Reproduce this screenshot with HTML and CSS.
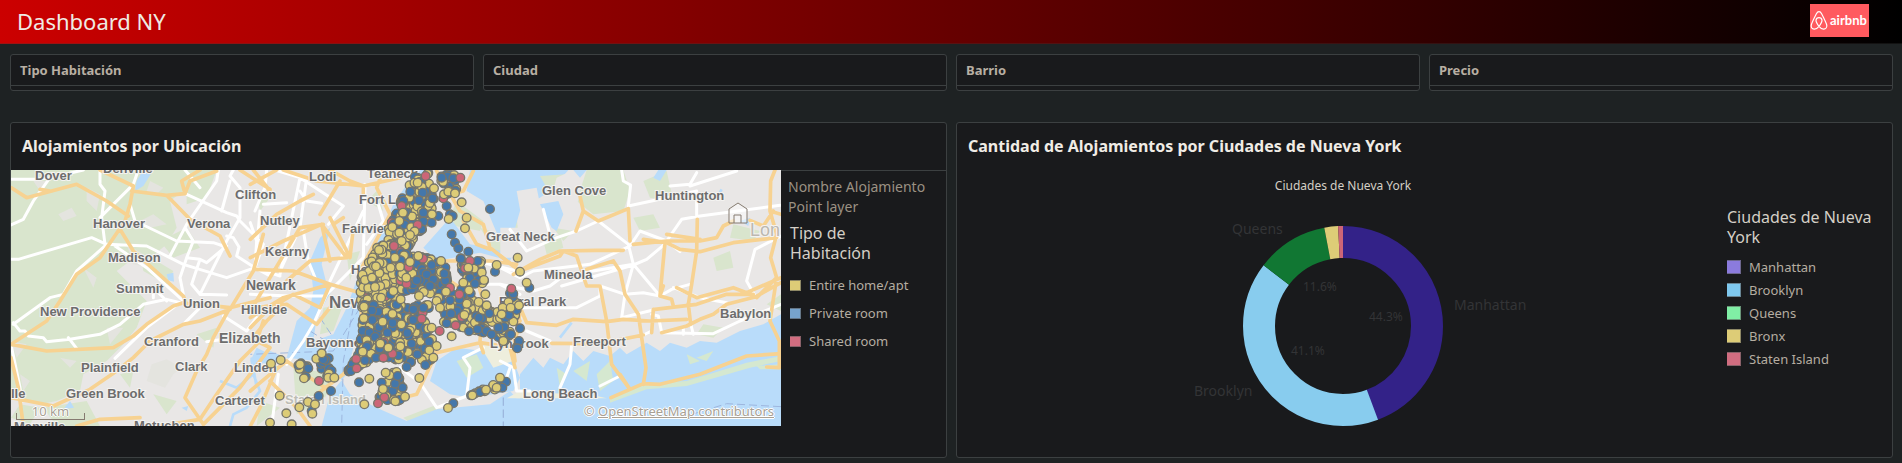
FILE: index.html
```html
<!DOCTYPE html>
<html lang="es">
<head>
<meta charset="utf-8">
<title>Dashboard NY</title>
<link rel="stylesheet" href="styles.css">
</head>
<body>
<header class="topbar">
  <h1 class="topbar-title">Dashboard NY</h1>
  <svg class="logo" viewBox="0 0 59 33" role="img" aria-label="airbnb">
    <rect width="59" height="33" fill="#ff5a5f"/>
    <path d="M9 22.3C6.9 19.6 5.9 17.8 6 16.2C6.2 14.5 7.4 13.6 9 13.6S11.8 14.5 12 16.2C12.1 17.8 11.1 19.6 9 22.3C7.3 24.4 5.8 25.2 4.2 25.1C2.3 24.9 1 23.3 1.2 21.4C1.4 20 3.2 16 6.4 9.8C7.2 8.2 7.9 7.7 9 7.7S10.8 8.2 11.6 9.8C14.8 16 16.6 20 16.8 21.4C17 23.3 15.7 24.9 13.8 25.1C12.2 25.2 10.7 24.4 9 22.3Z" fill="none" stroke="#fff" stroke-width="1.2"/>
    <text x="20" y="21" class="logo-text">airbnb</text>
  </svg>
</header>

<main class="sheet">
  <div class="filters">
    <button class="filter" type="button"><span class="filter-name">Tipo Habitación</span></button>
    <button class="filter" type="button"><span class="filter-name">Ciudad</span></button>
    <button class="filter" type="button"><span class="filter-name">Barrio</span></button>
    <button class="filter" type="button"><span class="filter-name">Precio</span></button>
  </div>

  <div class="panels">
    <section class="panel">
      <h2 class="panel-title">Alojamientos por Ubicación</h2>
      <div class="panel-body ruled">
        <div class="map">
          <svg class="map-canvas" viewBox="0 0 770 256" preserveAspectRatio="xMidYMid slice" role="img" aria-label="Mapa de alojamientos">
            <rect width="770" height="256" class="land"/>
            <g transform="scale(.33333)">
              <g transform="translate(-33 -27)">
                <path class="green" d="M33 27H560L590 60L510 120L530 200L500 250L440 300L390 300L350 330L400 380L440 420L410 500L370 550L320 600L250 640L240 690L170 720L120 730L33 700Z"/>
                <path class="green" d="M560 27H650L620 110L560 130ZM590 520L650 500L640 560ZM420 270L520 330L500 370L430 330ZM130 740L260 720L300 795H170ZM460 700L530 720L500 760ZM330 400L420 390L400 440ZM480 240L560 200L600 260L520 290ZM60 730L120 740L90 790L33 770ZM360 640L400 630L390 680Z"/>
                <path class="patch" d="M260 80L300 100L290 150L260 120ZM175 160L215 140L230 165L190 180ZM450 60L490 80L470 100L440 90ZM420 180L460 160L500 190L450 200ZM100 60L140 60L120 90ZM33 540L80 550L50 590ZM320 500L370 500L330 550ZM180 590L230 600L210 620ZM250 320L290 350L280 380ZM380 250L430 280L450 320L400 310ZM60 640L90 660L70 690Z"/>
                <path class="patch" fill="#f3f3ee" d="M455 610L500 595L545 620L520 640L495 680L440 660Z"/>
                <path class="water" d="M410 60L430 27H460L430 75L405 90ZM500 340L520 335L522 362L505 358ZM190 745L210 720L222 740ZM545 740L565 735L560 750Z"/>
                <path class="river" d="M660 660L710 680L760 640L780 690L740 740L700 760L690 795M780 570L760 620L770 680"/>
              </g>
              <g transform="translate(717 -27)">
                <path class="green" d="M690 200L740 215L800 170L810 260L740 280ZM590 190L620 120L700 180L690 210ZM220 440L280 430L250 510L210 520ZM130 620L260 640L220 720L140 760ZM30 720L90 740L20 795ZM460 770L550 735L570 745L480 785ZM350 120L380 90L400 150ZM20 90L60 110L30 150ZM290 280L330 270L300 360Z"/>
                <path class="water" d="M500 27L535 27L430 200L345 330L325 430L350 490L310 560L290 640L240 700L215 795H1600V735L1560 712H800L780 690L720 730L560 745L470 780L380 740L300 700L270 650L200 600L110 590L140 480L180 440L190 390L180 300L210 230L240 200L215 310L230 370L250 380L200 470L190 540L250 520L290 440L330 330L380 250L430 130Z"/>
                <path class="water" d="M660 27H955L920 70L960 110L900 90L810 150L790 220L740 215L700 120L650 90ZM520 260L600 170L660 250L720 260L790 280L780 300L690 275L610 290L560 300ZM560 600L620 560L700 570L790 600L810 650L790 690L660 710L600 700L540 660ZM1 590L60 570L110 590L60 610L1 600ZM20 560L60 580L10 640L1 600Z"/>
                <path class="islet" d="M620 600L680 580L700 620L650 650Z"/>
                <path class="sand" d="M690 555L780 550L790 600L730 620Z"/>
                <path class="ferry" d="M310 440L280 600L275 795M330 440L250 570L1 580M760 710V795M210 470L250 530M180 510L260 560"/>
              </g>
              <g transform="translate(1467 -27)">
                <path class="green" d="M260 27H370L390 90L370 150L280 160L230 120ZM430 60L500 30L520 120L450 110ZM120 45L200 40L190 90L140 80ZM640 290L690 270L700 320L650 330ZM700 190L780 210L760 240L690 230ZM160 200L220 210L190 240Z"/>
                <path class="green" d="M130 240L180 220L190 260L140 280ZM610 490L670 500L640 530L590 520ZM800 430L843 400V450ZM400 170L460 160L480 200L420 210Z"/>
                <path class="land" d="M50 90L110 80L120 130L150 220L60 290L1 290V200L70 200ZM170 50L220 27L240 100L210 200L170 190L150 120ZM80 170L110 190L70 240Z"/>
                <path class="water" d="M120 130L175 120L190 160L170 210L155 200ZM220 27L260 27L240 50ZM460 50L475 27H500L480 60ZM720 180L750 170L745 195Z"/>
                <path class="water" d="M60 640L100 590L130 620L150 590L190 610L220 570L250 600L280 570L330 585L360 560L380 580L440 545L480 570L510 545L560 560L600 540L650 545L720 510L790 490L843 460V795H330L320 720H60Z"/>
                <path class="islet" d="M220 630L270 600L260 660ZM290 640L330 600L340 660L300 690ZM560 580L600 600L570 610ZM170 620L200 640L180 680ZM590 590L640 570L620 600ZM330 715L420 670L560 660L740 605L843 585V600L750 620L560 675L440 685L330 725ZM770 615L843 610V625L780 625Z"/>
                <path class="sand" d="M60 690L290 705L320 712H20Z"/>
                <path class="ferry" d="M843 737L680 728L560 765M10 710V795"/>
                <path class="river" d="M180 530L215 485M650 110L665 85"/>
              </g>

              <g class="road minor" transform="translate(-33 -27)">
                <path d="M33 55H115L150 50L250 27M150 50L100 120L70 175L33 192M300 27V70L315 90L305 170L315 250M415 27L400 70L300 170M390 130L405 180L530 240L640 245L670 255M33 295H55L275 230L320 250L440 255L550 310L680 350L765 320M345 255L440 320L550 420M315 255L230 330L190 400L150 410L40 490M40 485L60 510H75L85 525L130 530L140 542L210 535L300 520L360 490L430 430L500 415L540 425L440 500L345 592M205 530L232 565M560 100L680 155L710 165L720 180L790 250L765 320M655 27L650 60L560 190L510 285M690 60L665 150M700 27L690 45L720 80V170L680 240L600 400M555 200L580 240L560 290L540 350L550 400M560 290L600 295L575 370L600 400L680 402M680 255L620 305L600 295M680 225L700 230L717 258L710 285L765 320M550 490L600 440M500 420L460 380V410M35 560L60 680L65 720M555 27L600 80M670 465L740 510L770 470M765 320L780 150M765 320L810 345M620 542L670 535"/>
              </g>
              <g class="road minor" transform="translate(717 -27)">
                <path d="M50 27L45 80L15 150M75 27L150 50L90 340M150 50L280 135L235 190M150 90L170 120L215 127M40 130L110 125M90 330L150 200L170 50M1 185L20 240L15 320M15 320L90 345M160 210L175 300L195 350M345 70L340 290L230 400L190 490L160 540L110 610M340 150L240 360M385 130L400 180L350 250M1 400L120 405L220 405M85 640L65 795M510 665L560 740L650 705L660 620L640 590L700 560M700 370L750 370L810 400M680 300L800 330M780 620L760 680M380 700L450 620L510 665M550 410L810 470M560 300L620 420L700 500"/>
              </g>
              <g class="road minor" transform="translate(1467 -27)">
                <path d="M365 27L370 60L392 72L385 135L500 110L590 90V165M510 75L570 70L590 35M570 75L710 30M130 145L147 210M1 320L60 350L100 330L270 310L390 255L420 210L500 240L540 272M30 205L80 270L170 230L230 210L295 180L385 250L400 310L480 405L515 385L570 370M500 240L545 175L600 165L840 133M185 375L400 312L440 295L500 245M400 310L375 400L365 470L460 447M1 370L100 390L150 375L190 345L400 310M60 440L230 440L300 405V375L375 400L430 395L480 405M80 510L150 540M215 550L210 610L180 680M455 460L475 465L485 515M520 380L600 410L680 425M485 515L640 518L720 480L843 430M570 480L580 520M843 225L765 265L740 360L768 410M300 675L360 645M1 600L40 620L50 690H90M430 522L455 510M550 500V520"/>
              </g>
              <g class="road major" transform="translate(-33 -27)">
                <path d="M33 80L80 110L230 70L320 120L385 165M300 27L400 75L390 130L375 180L300 290L230 340L180 420L140 480L33 550M395 90L500 103L555 98L570 60L650 30M500 103L570 175L660 225L690 285M360 205L400 270L550 405L560 430M555 98L545 60L600 27M720 27L810 85M33 550L140 570L340 560L400 525L440 490L520 435L550 425L690 440M690 440L640 530L620 580L590 630L555 710L610 790M690 445L600 480L550 490L450 540L400 590L350 630L270 685L160 735L33 710M33 590L55 680L70 795M230 795L300 775L420 770M480 795L600 775L650 700L720 600L780 540M610 790L720 680L810 560M690 440L810 410M690 445L760 330L790 220M760 27L810 90M790 480L770 540L810 560M120 85L150 90"/>
              </g>
              <g class="road major" transform="translate(717 -27)">
                <path d="M80 27L1 70M100 27L200 60L340 75L450 50M240 27L300 60L340 75V100M270 60L210 160M1 235L80 160L150 120L190 100M1 290L100 240L215 190L240 300M15 325L130 330L240 370M240 370L210 440L130 400L80 430L1 445M215 190L290 290L180 300L110 360M240 170L300 290L310 200M250 190L280 170M1 450L60 350L150 200L220 190M1 470L100 410L240 370L330 395M1 500L60 440L110 430L200 490L240 440M1 540L50 480L100 430M330 395L340 560L280 640L200 700M1 690L60 640L110 600L180 650L240 690M1 795L30 740L80 620M60 660L140 740L180 795M400 27L380 80L420 160L330 330M560 30L630 150L700 190L720 260L810 330M670 30L640 90L600 100M640 180L680 250L720 265M580 300L720 300L800 310M480 440L560 575L690 545L790 560L795 600M560 575L500 700L440 715M690 545L700 575M600 360L720 440L810 480M660 290L700 420L690 540"/>
              </g>
              <g class="road major" transform="translate(1467 -27)">
                <path d="M240 105L250 150L228 210M250 150L295 180L385 143L390 240M1 285L40 315M40 340L120 295L180 270L290 268H370M60 330L180 285L190 270L230 285L260 375L300 375L320 480L335 610L390 685M340 300L260 325M340 300L360 330L375 400L415 460L438 620L430 670M400 250L500 240L600 240L650 230L670 195L700 180M430 235L500 245L540 265L600 272L700 245L830 230M592 175L590 270L575 370L565 430L572 490M495 245L480 405L515 415L520 435M490 375L480 405M825 27L812 60L810 150L843 160M750 178L790 195L820 150M810 150L830 220L812 290L830 350L770 410M843 350L740 395L700 380L590 410L530 380M465 445L590 430L680 400L760 400M485 515L560 495L600 475L640 460L680 430L765 408L843 365M830 350L810 480L838 540V620L800 618M65 450L80 485L170 493L220 475L320 482L370 475L450 480L560 475M155 547L300 548L430 522M460 445L455 515M60 440L55 510L30 560L45 620M333 710L430 668L480 670L600 640L740 585L843 578M390 685L360 640M500 220L600 235"/>
              </g>
            </g>
            <g class="place">
              <text x="24" y="10">Dover</text><text x="92" y="3">Denville</text>
              <text x="82" y="58">Hanover</text><text x="176" y="58">Verona</text>
              <text x="97" y="92">Madison</text><text x="105" y="123">Summit</text>
              <text x="29" y="146">New Providence</text><text x="172" y="138">Union</text>
              <text x="133" y="176">Cranford</text><text x="70" y="202">Plainfield</text>
              <text x="164" y="201">Clark</text><text x="55" y="228">Green Brook</text>
              <text x="204" y="235">Carteret</text><text x="0" y="228">lle</text>
              <text x="3" y="261">Manville</text><text x="123" y="260">Metuchen</text>
              <text x="223" y="202">Linden</text><text x="230" y="144">Hillside</text>
              <text x="224" y="29">Clifton</text><text x="298" y="11">Lodi</text>
              <text x="356" y="8">Teaneck</text><text x="348" y="34">Fort Lee</text>
              <text x="249" y="55">Nutley</text><text x="331" y="63">Fairview</text>
              <text x="254" y="86">Kearny</text><text x="340" y="104">Hoboken</text>
              <text x="295" y="177">Bayonne</text><text x="475" y="71">Great Neck</text>
              <text x="531" y="25">Glen Cove</text><text x="644" y="30">Huntington</text>
              <text x="533" y="109">Mineola</text><text x="488" y="136">Floral Park</text>
              <text x="479" y="178">Lynbrook</text><text x="562" y="176">Freeport</text>
              <text x="709" y="148">Babylon</text><text x="512" y="228">Long Beach</text>
            </g>
            <g class="place city"><text x="235" y="120">Newark</text><text x="208" y="173">Elizabeth</text></g>
            <g class="place metro"><text x="318" y="138">New York</text></g>
            <g class="place faint"><text x="274" y="234">Staten Island</text></g>
            <g class="place region"><text x="739" y="66">Lon</text></g>
            <g id="points" class="points" transform="scale(.33333) translate(717 -27)"></g>
          </svg>
          <button class="home" type="button" aria-label="Inicio">
            <svg width="20" height="22" viewBox="0 0 20 22"><path d="M1 21V7L10 1L19 7V21ZM6 21V13H13V21" fill="#fff" fill-opacity=".5" stroke="#857b70"/></svg>
          </button>
          <div class="scale">10 km</div>
          <div class="credit">© <a href="#osm">OpenStreetMap contributors</a></div>
        </div>
        <aside class="legend layer-legend">
          <p class="layer-name">Nombre Alojamiento Point layer</p>
          <h3 class="legend-title">Tipo de Habitación</h3>
          <ul class="legend-list">
            <li><i class="swatch yellow"></i>Entire home/apt</li>
            <li><i class="swatch blue"></i>Private room</li>
            <li><i class="swatch red"></i>Shared room</li>
          </ul>
        </aside>
      </div>
    </section>

    <section class="panel">
      <h2 class="panel-title">Cantidad de Alojamientos por Ciudades de Nueva York</h2>
      <div class="panel-body">
        <svg class="donut" viewBox="0 0 770 286" role="img" aria-label="Ciudades de Nueva York">
          <text class="donut-title" x="386" y="20" text-anchor="middle">Ciudades de Nueva York</text>
          <g class="ring" transform="rotate(-90 386 156)">
            <circle cx="386" cy="156" r="84" pathLength="1000" stroke="#332288" stroke-dasharray="444 1000"/>
            <circle cx="386" cy="156" r="84" pathLength="1000" stroke="#88ccee" stroke-dasharray="411 1000" stroke-dashoffset="-443"/>
            <circle cx="386" cy="156" r="84" pathLength="1000" stroke="#117733" stroke-dasharray="116 1000" stroke-dashoffset="-854"/>
            <circle cx="386" cy="156" r="84" pathLength="1000" stroke="#ddcc77" stroke-dasharray="22 1000" stroke-dashoffset="-970"/>
            <circle cx="386" cy="156" r="84" pathLength="1000" stroke="#cc6677" stroke-dasharray="8 1000" stroke-dashoffset="-992"/>
          </g>
          <g class="slice-name">
            <text x="275" y="64">Queens</text>
            <text x="497" y="140">Manhattan</text>
            <text x="237" y="226">Brooklyn</text>
          </g>
          <g class="slice-value">
            <text x="346" y="121">11.6%</text>
            <text x="412" y="151">44.3%</text>
            <text x="334" y="185">41.1%</text>
          </g>
        </svg>
        <aside class="legend city-legend">
          <h3 class="legend-title">Ciudades de Nueva York</h3>
          <ul class="legend-list">
            <li><i class="swatch violet"></i>Manhattan</li>
            <li><i class="swatch sky"></i>Brooklyn</li>
            <li><i class="swatch mint"></i>Queens</li>
            <li><i class="swatch yellow"></i>Bronx</li>
            <li><i class="swatch red"></i>Staten Island</li>
          </ul>
        </aside>
      </div>
    </section>
  </div>
</main>
<script src="points.js"></script>
</body>
</html>
```
FILE: styles.css
```css
* { box-sizing: border-box; }

body {
  margin: 0;
  background: #1e2223;
  color: #b5ada1;
  font-family: "Noto Sans", "Open Sans", sans-serif;
  font-size: 13px;
}

h1, h2, h3, p, ul { margin: 0; padding: 0; font-weight: 400; }
ul { list-style: none; }

.topbar {
  display: flex;
  align-items: center;
  justify-content: space-between;
  height: 44px;
  padding: 0 33px 3px 17px;
  background: linear-gradient(90deg, #cc0000, #000);
  border-bottom: 1px solid rgba(60, 60, 60, .3);
}
.topbar-title { color: #efebe4; font-size: 22px; line-height: 30px; padding-top: 2px; }
.logo { width: 59px; height: 33px; }
.logo-text { fill: #fff; font: 700 13px Lato, sans-serif; }

.sheet { padding: 10px 9px 6px 10px; }

.filters {
  display: grid;
  grid-template-columns: repeat(4, 1fr);
  gap: 9px;
}
.filter {
  display: block;
  padding: 0 0 4px;
  background: #191a1c;
  border: 1px solid #3c4041;
  border-radius: 3px;
  font: inherit;
  text-align: left;
}
.filter-name {
  display: block;
  padding: 0 9px;
  border-bottom: 1px solid #3c4041;
  color: #b8afa3;
  font-weight: 700;
  line-height: 30px;
}

.panels {
  display: grid;
  grid-template-columns: 1fr 1fr;
  gap: 9px;
  margin-top: 31px;
}
.panel {
  min-width: 0;
  background: #191a1c;
  border: 1px solid #3c4041;
  border-radius: 3px;
}
.panel-title {
  padding: 8px 11px;
  color: #f0ece5;
  font-size: 16px;
  font-weight: 700;
  line-height: 31px;
}
.panel-body { display: grid; grid-template-columns: minmax(0, 1fr) 165px; }

.map { position: relative; height: 256px; margin-bottom: 31px; overflow: hidden; }
.map-canvas { display: block; width: 100%; height: 100%; }
.land { fill: #e9e7e6; }
.green { fill: #d9e5cd; }
.patch { fill: #e4e4df; }
.water { fill: #b9dcfa; }
.islet { fill: #d5e8d0; }
.sand { fill: #eeeedd; }
.river { fill: none; stroke: #b9dcfa; stroke-width: 8; }
.ferry { fill: none; stroke: #9db6de; stroke-width: 3; stroke-dasharray: 24 12; }
.road { fill: none; stroke-linejoin: round; stroke-linecap: round; }
.minor { stroke: #fff; stroke-width: 9; }
.major { stroke: #f7d291; stroke-width: 11; }
.place {
  fill: #6d6d6d;
  stroke: #f4f3f1;
  stroke-width: 2px;
  paint-order: stroke;
  font: 700 13px "Liberation Sans", Arial, sans-serif;
}
.city { font-size: 14px; }
.metro { font-size: 17px; }
.faint { fill: #bdbdb5; }
.region { fill: #bcb8b0; font-size: 18px; font-weight: 400; }
.points { stroke: #77766c; stroke-width: 4; }

.home, .scale, .credit { position: absolute; }
.home { top: 32px; right: 33px; padding: 0; border: 0; background: none; line-height: 0; }
.scale, .credit {
  color: #a8a094;
  text-shadow: 1px 0 #fff, -1px 0 #fff, 0 1px #fff, 0 -1px #fff;
}
.scale {
  left: 5px;
  bottom: 6px;
  width: 69px;
  height: 16px;
  line-height: 14px;
  text-align: center;
}
.scale::after {
  content: "";
  position: absolute;
  inset: 9px 0 0;
  border: 1px solid #857b70;
  border-top: 0;
}
.credit { right: 7px; bottom: 5px; line-height: 20px; }
.credit a { color: inherit; }

.legend-title { color: #d4cfc6; font-size: 16px; line-height: 20px; }
.legend-list li { display: flex; align-items: center; }
.swatch { flex: none; border: 1px solid rgba(90, 90, 90, .6); border-width: 1px 1px 1px 0; }
.yellow { background: #ddcc77; }
.blue { background: #77a3cc; }
.red { background: #d16d80; }
.violet { background: #8b7bdd; }
.sky { background: #7ec8ee; }
.mint { background: #80eea5; }

.layer-legend { padding: 6px 15px 0 7px; }
.ruled .layer-legend { border-top: 1px solid #3c4041; }
.layer-name { color: #9b9183; font-size: 14px; line-height: 20px; }
.layer-legend .legend-title { width: 100px; padding: 6px 0 0 2px; }
.layer-legend .legend-list { padding: 8px 0 0 2px; }
.layer-legend li { gap: 8px; height: 28px; }
.layer-legend .swatch { width: 11px; height: 11px; }

.donut { display: block; width: 100%; height: 286px; }
.donut-title { fill: #d4cfc6; font-size: 12px; }
.ring { fill: none; stroke-width: 32; }
.slice-name { fill: #333436; font-size: 14px; }
.slice-value { fill: #333436; font-size: 12px; }

.city-legend { padding-top: 37px; }
.city-legend .legend-list { padding-top: 8px; }
.city-legend li { gap: 8px; height: 23px; }
.city-legend .swatch { width: 14px; height: 14px; }
```
FILE: points.js
```js
// Listings drawn on the map. Areas are filled first, single listings go on top.
const COLORS = { y: "#ddcc77", b: "#4477aa", r: "#cc6677" };

// [polygon, number of points, share of yellow]
const AREAS = [
  ["495,40 560,110 520,210 470,260 440,250 400,250 420,190 450,120", 130, 0.5],
  ["440,240 500,215 440,330 445,440 325,440 335,340 380,260", 260, 0.9],
  ["445,270 580,300 600,350 570,400 450,390", 140, 0.4],
  ["340,430 540,430 530,480 500,560 480,620 460,600 380,590 290,635 330,570 335,490", 320, 0.42],
  ["560,390 640,380 720,440 760,500 750,530 680,510 580,490", 90, 0.4],
  ["630,290 695,290 705,370 640,370", 32, 0.4],
  ["660,705 690,685 765,660 765,680", 16, 0.7],
  ["530,490 560,560 545,610 500,600 500,560", 26, 0.6],
  ["380,690 430,620 465,660 450,725 390,715", 32, 0.5],
  ["140,605 180,610 170,655 150,640", 6, 0.4],
  ["195,590 220,570 240,595 250,650 230,650", 14, 0.5],
  ["565,50 620,27 620,95 575,105", 18, 0.5],
  ["735,460 790,400 812,430 800,500 760,545", 36, 0.6],
  ["480,60 540,27 545,100 490,100", 14, 0.5]
];

const LISTINGS = {
  b: "481,92 518,95 460,120 507,118 548,112 520,155 565,165 590,135 600,160 608,165 720,144 605,220 615,245 625,262 655,272 545,185 515,205 610,52 575,50 683,300 735,332 583,338 545,312 530,340 550,355 490,370 500,358 540,375 675,368 780,397 777,462 783,520 603,458 600,418 628,415 590,487 657,511 687,470 718,457 683,505 745,500 710,510 725,520 800,558 367,477 428,486 472,516 412,515 490,445 520,440 502,580 526,612 445,583 485,548 327,664 303,630 345,598 378,590 395,665 435,668 443,645 470,618 220,595 153,607 175,622 243,690 206,705 185,750 610,727 690,693 768,662 757,680 537,542 838,380 810,502 807,540 802,562 800,447 790,398",
  y: "552,82 503,65 582,100 595,92 615,97 635,124 650,170 596,174 645,202 546,160 459,155 448,180 427,198 448,215 455,240 494,211 480,222 435,290 387,267 378,316 422,320 345,357 366,350 480,303 505,285 469,350 507,405 375,378 430,390 452,415 342,437 398,482 454,490 338,572 391,548 415,560 451,556 407,635 508,651 358,653 399,684 436,721 465,707 343,730 162,652 150,610 92,597 63,608 215,577 235,650 253,650 89,704 174,723 195,730 148,739 109,757 60,785 125,790 187,758 594,741 667,703 708,686 740,680 750,650 565,410 560,420 640,365 655,320 657,388 740,312 702,357 706,400 686,423 710,433 643,462 605,526 545,500 570,440 560,555 538,568 550,590 758,440 782,440 755,460 760,540 803,290 810,332 830,365 807,433 588,392 573,300",
  r: "527,45 631,50 503,192 455,135 519,293 476,318 470,368 660,300 645,322 784,383 600,380 628,400 515,473 569,510 635,468 617,493 427,578 400,590 320,622 207,660 403,709 384,727 432,255 580,112"
};

const layer = document.getElementById("points");
const parse = (text) => text.split(" ").map((pair) => pair.split(",").map(Number));

let seed = 71;
function random() {
  seed = (seed * 16807) % 2147483647;
  return seed / 2147483647;
}

function inside(x, y, shape) {
  let hit = false;
  for (let i = 0, j = shape.length - 1; i < shape.length; j = i++) {
    const [xi, yi] = shape[i];
    const [xj, yj] = shape[j];
    if (yi > y !== yj > y && x < ((xj - xi) * (y - yi)) / (yj - yi) + xi) hit = !hit;
  }
  return hit;
}

function dot(x, y, kind) {
  const circle = document.createElementNS("http://www.w3.org/2000/svg", "circle");
  circle.setAttribute("cx", x);
  circle.setAttribute("cy", y);
  circle.setAttribute("r", 13);
  circle.setAttribute("fill", COLORS[kind]);
  layer.append(circle);
}

for (const [text, count, yellow] of AREAS) {
  const shape = parse(text);
  const xs = shape.map((p) => p[0]);
  const ys = shape.map((p) => p[1]);
  const left = Math.min(...xs), top = Math.min(...ys);
  const width = Math.max(...xs) - left, height = Math.max(...ys) - top;
  let placed = 0;
  while (placed < count) {
    const x = left + random() * width;
    const y = top + random() * height;
    if (!inside(x, y, shape)) continue;
    const pick = random();
    dot(x, y, pick < yellow ? "y" : pick > 0.98 ? "r" : "b");
    placed++;
  }
}

for (const kind of ["b", "r", "y"]) {
  for (const [x, y] of parse(LISTINGS[kind])) dot(x, y, kind);
}
```
